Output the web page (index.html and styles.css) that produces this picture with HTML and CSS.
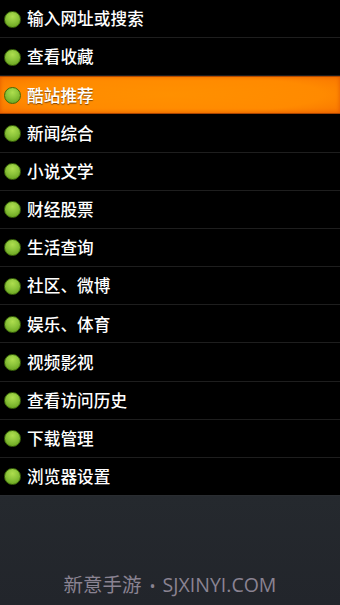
FILE: index.html
```html
<!DOCTYPE html>
<html lang="zh">
<head>
<meta charset="utf-8">
<link rel="stylesheet" href="styles.css">
</head>
<body>
<div class="screen">
  <ul class="menu">
    <li class="item"><span class="dot"></span><span class="label">输入网址或搜索</span></li>
    <li class="item"><span class="dot"></span><span class="label">查看收藏</span></li>
    <li class="item active"><span class="dot"></span><span class="label">酷站推荐</span></li>
    <li class="item"><span class="dot"></span><span class="label">新闻综合</span></li>
    <li class="item"><span class="dot"></span><span class="label">小说文学</span></li>
    <li class="item"><span class="dot"></span><span class="label">财经股票</span></li>
    <li class="item"><span class="dot"></span><span class="label">生活查询</span></li>
    <li class="item"><span class="dot"></span><span class="label">社区、微博</span></li>
    <li class="item"><span class="dot"></span><span class="label">娱乐、体育</span></li>
    <li class="item"><span class="dot"></span><span class="label">视频影视</span></li>
    <li class="item"><span class="dot"></span><span class="label">查看访问历史</span></li>
    <li class="item"><span class="dot"></span><span class="label">下载管理</span></li>
    <li class="item"><span class="dot"></span><span class="label">浏览器设置</span></li>
  </ul>
  <div class="footer">
    <span class="watermark">新意手游<span class="sep">•</span>SJXINYI.COM</span>
  </div>
</div>
</body>
</html>
```
FILE: styles.css
```css
html, body {
  margin: 0;
  padding: 0;
  background: #000;
}
.screen {
  width: 340px;
  height: 605px;
  display: flex;
  flex-direction: column;
  font-family: "Noto Sans CJK SC", "Noto Sans", sans-serif;
  overflow: hidden;
}
.menu {
  list-style: none;
  margin: 0;
  padding: 0;
  background: #000;
  height: 496px;
  flex: none;
  display: grid;
  grid-template-rows: repeat(13, 1fr);
}
.item {
  box-sizing: border-box;
  border-bottom: 1px solid #1e1e1e;
  display: flex;
  align-items: center;
  padding-left: 4px;
}
.item:last-child {
  border-bottom: 1px solid #2a2d31;
}
.item.active {
  background: radial-gradient(ellipse 75% 85% at 50% 50%, #ff9000 0%, #ff8a00 60%, #f56d00 100%);
  border-bottom: 1px solid #a84400;
  box-shadow: inset 0 1px 0 #b34a00, inset 0 0 4px #e05800;
}
.dot {
  width: 17px;
  height: 17px;
  border-radius: 50%;
  box-sizing: border-box;
  border: 1px solid #3e6a0c;
  background: radial-gradient(circle at 50% 30%, #aede4e 0%, #8cc43a 45%, #5f9a17 100%);
  flex: none;
  margin-top: 1px;
}
.label {
  margin-left: 6px;
  color: #fff;
  font-size: 16.6px;
  font-weight: 500;
  line-height: 1;
  letter-spacing: 0.1px;
  text-shadow: 0 1px 1px rgba(0,0,0,0.5);
}
.footer {
  flex: 1;
  background: linear-gradient(#25292e, #22252b);
  display: flex;
  align-items: flex-end;
  justify-content: center;
  padding-bottom: 11px;
}
.watermark {
  color: #8a8392;
  font-family: "Open Sans", "Noto Sans CJK SC", sans-serif;
  font-size: 19.5px;
  line-height: 1;
}
.sep {
  margin: 0 7px 0 8px;
  font-size: 16px;
}
```
